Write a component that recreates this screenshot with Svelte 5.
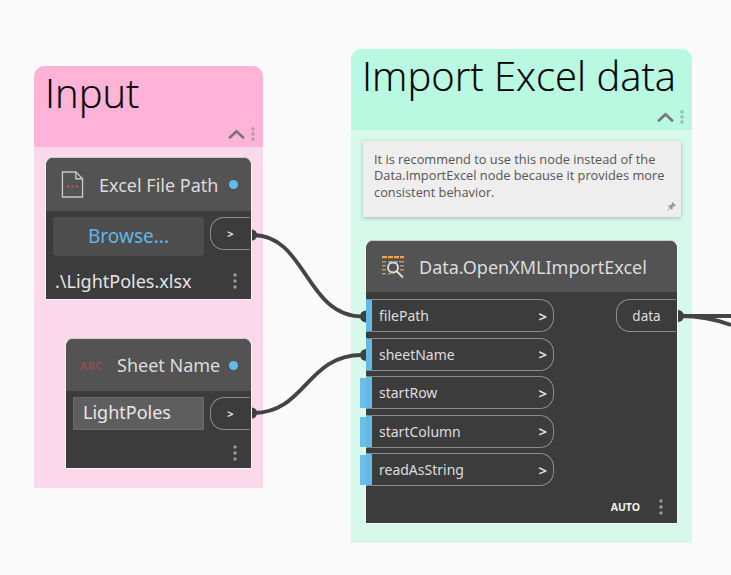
<script>
	const inputs = [
		{ name: 'filePath', connected: true },
		{ name: 'sheetName', connected: true },
		{ name: 'startRow', connected: false },
		{ name: 'startColumn', connected: false },
		{ name: 'readAsString', connected: false }
	];
</script>

<div class="canvas">
	<section class="group input-group">
		<header class="group-head">
			<h1>Input</h1>
			<div class="group-tools">
				<svg class="chevron" viewBox="0 0 16 10"><path d="M1 8.500 8 2l7 6.500" /></svg>
				<svg class="mini-dots" viewBox="0 0 4 14">
					<circle cx="2" cy="2" r="1.300" /><circle cx="2" cy="7" r="1.300" /><circle cx="2" cy="12" r="1.300" />
				</svg>
			</div>
		</header>
		<div class="group-body"></div>
	</section>

	<section class="group excel-group">
		<header class="group-head">
			<h1>Import Excel data</h1>
			<div class="group-tools">
				<svg class="chevron" viewBox="0 0 16 10"><path d="M1 8.500 8 2l7 6.500" /></svg>
				<svg class="mini-dots" viewBox="0 0 4 14">
					<circle cx="2" cy="2" r="1.300" /><circle cx="2" cy="7" r="1.300" /><circle cx="2" cy="12" r="1.300" />
				</svg>
			</div>
		</header>
		<div class="group-body"></div>
	</section>

	<aside class="note">
		<p>It is recommend to use this node instead of the Data.ImportExcel node because it provides more consistent behavior.</p>
		<svg class="pin" viewBox="0 0 12 12"><path d="M7 1l4 4-1 .6-1-.3L7 7.500l.2 1.600-.8.8L4.600 8 1.500 11 1 10.500 4 7.400 2.100 5.600l.8-.8 1.600.2L6.700 2.800l-.3-1z" /></svg>
	</aside>

	<article class="node path-node">
		<header class="node-head">
			<svg class="file-icon" viewBox="0 0 24 28">
				<path class="outline" d="M1.500 1h14l7 7v19h-21z" />
				<path class="outline" d="M15.500 1v7h7" />
				<circle cx="7.500" cy="16" r="1.300" /><circle cx="12" cy="16" r="1.300" /><circle cx="16.500" cy="16" r="1.300" />
			</svg>
			<span class="node-title">Excel File Path</span>
			<i class="state"></i>
		</header>
		<div class="node-body">
			<div class="control-row">
				<button class="browse">Browse...</button>
				<span class="out-port small">&gt;</span>
			</div>
			<div class="value-row">
				<span>.\LightPoles.xlsx</span>
				<svg class="dots" viewBox="0 0 4 16"><circle cx="2" cy="2" r="1.700" /><circle cx="2" cy="8" r="1.700" /><circle cx="2" cy="14" r="1.700" /></svg>
			</div>
		</div>
	</article>

	<article class="node sheet-node">
		<header class="node-head">
			<span class="abc">ABC</span>
			<span class="node-title">Sheet Name</span>
			<i class="state"></i>
		</header>
		<div class="node-body">
			<div class="control-row">
				<div class="text-input">LightPoles</div>
				<span class="out-port small">&gt;</span>
			</div>
			<div class="value-row end">
				<svg class="dots" viewBox="0 0 4 16"><circle cx="2" cy="2" r="1.700" /><circle cx="2" cy="8" r="1.700" /><circle cx="2" cy="14" r="1.700" /></svg>
			</div>
		</div>
	</article>

	<article class="node excel-node">
		<header class="node-head">
			<svg class="table-icon" viewBox="0 0 24 24">
				<path class="amber" d="M1 1h5v2.200H1zM7 1h5v2.200H7zM13 1h5v2.200h-5zM19 1h4v2.200h-4z" />
				<path class="tan" d="M1 6h4v1.500H1zM1 10h4v1.500H1zM1 14h4v1.500H1zM1 18h4v1.500H1zM7 6h4v1.500H7zM13 6h4v1.500h-4zM18 6h5v1.500h-5zM19 10h4v1.500h-4zM19 14h4v1.500h-4zM7 18h3v1.500H7z" />
				<circle class="lens" cx="12" cy="12.500" r="5" />
				<path class="lens" d="M15.500 16l6.500 6.500" />
			</svg>
			<span class="node-title">Data.OpenXMLImportExcel</span>
		</header>
		<div class="node-body ports">
			<ul class="in-list">
				{#each inputs as port}
					<li class="in-port" class:loose={!port.connected}>
						<span>{port.name}</span><b>&gt;</b>
					</li>
				{/each}
			</ul>
			<span class="out-port data">data</span>
		</div>
		<footer class="node-foot">
			<span>AUTO</span>
			<svg class="dots" viewBox="0 0 4 16"><circle cx="2" cy="2" r="1.700" /><circle cx="2" cy="8" r="1.700" /><circle cx="2" cy="14" r="1.700" /></svg>
		</footer>
	</article>

	<svg class="wires" viewBox="0 0 731 575">
		<path d="M253 235C306 235 306 316.500 362 316.500" />
		<path d="M253 413C306 413 306 355 362 355" />
		<path d="M680 316H731" />
		<path d="M680 316C700 316 715 319 731 325" />
		<path class="cap" d="M252 229.500a5 5.500 0 0 1 0 11z" />
		<path class="cap" d="M252 407.500a5 5.500 0 0 1 0 11z" />
		<path class="cap" d="M366 310.500a6 6 0 0 0 0 12z" />
		<path class="cap" d="M366 349a6 6 0 0 0 0 12z" />
		<path class="cap" d="M678 310a6 6 0 0 1 0 12z" />
	</svg>
</div>

<style>
	:global(body) {
		margin: 0;
		background: #fafafa;
	}
	.canvas {
		position: relative;
		width: 731px;
		height: 575px;
		overflow: hidden;
		font-family: "Noto Sans", sans-serif;
		color: #e4e4e4;
	}
	.group {
		position: absolute;
		display: flex;
		flex-direction: column;
		border-radius: 10px 10px 0 0;
		overflow: hidden;
	}
	.input-group { left: 34px; top: 66px; width: 229px; height: 422px; --head: #ffb3d6; --body: #fbd9ea; --head-h: 81px; }
	.excel-group { left: 351px; top: 49px; width: 341px; height: 494px; --head: #b9f9e1; --body: #d6f9ec; --head-h: 81px; }
	.group-head {
		position: relative;
		height: var(--head-h);
		background: var(--head);
	}
	.group-head h1 {
		margin: 0;
		padding: 1px 0 0 11px;
		font: 300 40px/52px "Open Sans", sans-serif;
		color: #000;
		white-space: nowrap;
		-webkit-text-stroke: 0.2px #000;
	}
	.group-tools {
		position: absolute;
		right: 8px;
		bottom: 6px;
		display: flex;
		align-items: center;
		gap: 6px;
	}
	.chevron { width: 17px; height: 11px; }
	.chevron path { fill: none; stroke: #777; stroke-width: 2.500; }
	.mini-dots { width: 4px; height: 14px; }
	.mini-dots circle { fill: none; stroke: #777; stroke-width: 0.600; }
	.group-body { flex: 1; background: var(--body); }

	.note {
		position: absolute;
		left: 363px;
		top: 141px;
		width: 318px;
		height: 76px;
		box-sizing: border-box;
		padding: 10px 11px 0;
		background: #eeeeee;
		box-shadow: 0 1px 4px rgba(0, 0, 0, 0.25);
		color: #555;
	}
	.note p {
		margin: 0;
		font: 12.800px/16.400px "Open Sans", sans-serif;
	}
	.pin {
		position: absolute;
		right: 4px;
		bottom: 5px;
		width: 11px;
		height: 11px;
		fill: #999;
	}

	.node {
		position: absolute;
		display: flex;
		flex-direction: column;
		box-sizing: border-box;
		background: #3c3c3c;
		border: 1px solid #f4f4f4;
		border-top-color: #ccc;
		border-radius: 8px 8px 0 0;
	}
	.path-node { left: 45px; top: 157px; width: 207px; height: 143px; --head-h: 53px; }
	.sheet-node { left: 65px; top: 338px; width: 187px; height: 131px; --head-h: 52px; }
	.excel-node { left: 365px; top: 240px; width: 313px; height: 284px; --head-h: 51px; }
	.node-head {
		display: flex;
		align-items: center;
		flex: none;
		box-sizing: border-box;
		height: var(--head-h);
		background: #535353;
		border-radius: 7px 7px 0 0;
		font-size: 18px;
		color: #dcdcdc;
	}
	.node-title { white-space: nowrap; }
	.state {
		width: 9px;
		height: 9px;
		margin-left: auto;
		margin-right: 13px;
		border-radius: 50%;
		background: #5dbcea;
	}
	.file-icon { width: 23px; height: 27px; margin: 0 15px 0 15px; flex: none; }
	.file-icon .outline { fill: none; stroke: #c8c8c8; stroke-width: 1.400; }
	.file-icon circle { fill: #b35a5a; }
	.abc {
		margin: 0 15px 0 14px;
		font-size: 11px;
		font-weight: 700;
		color: #8c4f4f;
	}
	.table-icon { width: 24px; height: 24px; margin: 0 14px 0 15px; flex: none; }
	.table-icon .amber { fill: #f0a63c; }
	.table-icon .tan { fill: #b59a70; }
	.table-icon .lens { fill: none; stroke: #e0e0e0; stroke-width: 1.800; }

	.node-body { flex: 1; display: flex; flex-direction: column; min-height: 0; }
	.control-row {
		display: flex;
		align-items: flex-start;
		gap: 6px;
		padding: 6px 0 0 7px;
	}
	.browse {
		width: 151px;
		height: 39px;
		padding: 0 0 2px;
		border: 0;
		border-radius: 4px;
		background: #4e4e4e;
		color: #62b5e5;
		font: 19px "Noto Sans", sans-serif;
	}
	.text-input {
		box-sizing: border-box;
		width: 131px;
		height: 33px;
		padding-left: 9px;
		background: #5e5e5e;
		border: 1px solid #6a6a6a;
		font-size: 18px;
		line-height: 29px;
		color: #e8e8e8;
	}
	.out-port {
		display: flex;
		align-items: center;
		justify-content: center;
		box-sizing: border-box;
		height: 33px;
		border: 1px solid #8c8c8c;
		border-right: 0;
		border-radius: 14px 0 0 14px;
		font-size: 13px;
	}
	.out-port.small { width: 40px; font-size: 11px; font-weight: 700; }
	.value-row {
		display: flex;
		align-items: center;
		justify-content: space-between;
		flex: 1;
		padding: 7px 14px 0 9px;
		font-size: 18px;
	}
	.value-row.end { justify-content: flex-end; align-items: flex-end; padding-bottom: 7px; }
	.dots { width: 4px; height: 16px; fill: #999; }

	.ports {
		position: relative;
		display: block;
	}
	.in-list {
		list-style: none;
		margin: 7px 0 0;
		padding: 0;
		display: flex;
		flex-direction: column;
		gap: 5.500px;
	}
	.in-port {
		position: relative;
		display: flex;
		align-items: center;
		justify-content: space-between;
		box-sizing: border-box;
		width: 188px;
		height: 33px;
		padding: 0 6px 0 7px;
		border: 1px solid #8c8c8c;
		border-left: 6px solid #62b9e6;
		border-radius: 0 14px 14px 0;
		font-size: 14px;
		color: #dedede;
	}
	.in-port b { font-size: 15px; font-weight: 700; }
	.in-port.loose::before {
		content: "";
		position: absolute;
		left: -12px;
		top: 1px;
		width: 6px;
		height: 30px;
		background: #6cbfeb;
	}
	.out-port.data {
		position: absolute;
		right: 1px;
		top: 7px;
		width: 60px;
		font-size: 13.500px;
		color: #dedede;
	}
	.node-foot {
		display: flex;
		align-items: center;
		justify-content: flex-end;
		gap: 19px;
		padding: 0 14px 8px 0;
		font-size: 10.500px;
		font-weight: 700;
		color: #f0f0f0;
	}
	.wires {
		position: absolute;
		inset: 0;
		width: 731px;
		height: 575px;
		pointer-events: none;
	}
	.wires path { fill: none; stroke: #444; stroke-width: 3.800; }
	.wires path.cap { fill: #404040; stroke: none; }
</style>
